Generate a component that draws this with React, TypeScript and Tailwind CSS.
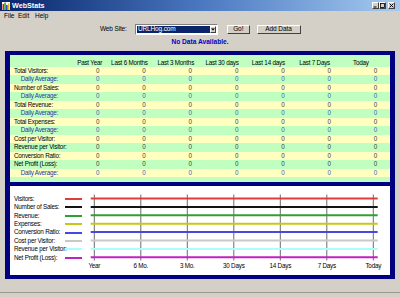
import React from "react";

const FONT = { fontFamily: '"Liberation Sans", Arial, sans-serif' };

const columns = ["Past Year", "Last 6 Months", "Last 3 Months", "Last 30 days", "Last 14 days", "Last 7 Days", "Today"];

const rows = [
    {name: "Total Visitors:", daily: false},
    {name: "Daily Average:", daily: true},
    {name: "Number of Sales:", daily: false},
    {name: "Daily Average:", daily: true},
    {name: "Total Revenue:", daily: false},
    {name: "Daily Average:", daily: true},
    {name: "Total Expenses:", daily: false},
    {name: "Daily Average:", daily: true},
    {name: "Cost per Visitor:", daily: false},
    {name: "Revenue per Visitor:", daily: false},
    {name: "Conversion Ratio:", daily: false},
    {name: "Net Profit (Loss):", daily: false},
    {name: "Daily Average:", daily: true},
];

const series = [
    {name: "Visitors:", color: "#e03c3c"},
    {name: "Number of Sales:", color: "#141414"},
    {name: "Revenue:", color: "#30a030"},
    {name: "Expenses:", color: "#c8c814"},
    {name: "Conversion Ratio:", color: "#4848e0"},
    {name: "Cost per Visitor:", color: "#c8c8c8"},
    {name: "Revenue per Visitor:", color: "#a8ffff"},
    {name: "Net Profit (Loss):", color: "#c020c0"},
];

const ticks = ["Year", "6 Mo.", "3 Mo.", "30 Days", "14 Days", "7 Days", "Today"];

const AppIcon = () => (
    <svg width="8" height="8" viewBox="0 0 8 8">
        <rect x="0" y="0" width="8" height="8" fill="#ffffff"/>
        <rect x="0.5" y="2" width="1.5" height="6" fill="#e02020"/>
        <rect x="2.3" y="0.5" width="1.5" height="7.5" fill="#20a020"/>
        <rect x="4.1" y="3" width="1.5" height="5" fill="#2030d0"/>
        <rect x="5.9" y="1.5" width="1.5" height="6.5" fill="#e0c000"/>
    </svg>
);

const CaptionButton: React.FC<{kind: "min" | "max" | "close"}> = ({kind}) => (
    <div className="w-[7px] h-[7px] bg-[#d4d0c8] border-t border-l border-white border-r border-b border-r-[#404040] border-b-[#404040] flex items-center justify-center">
        <svg width="5" height="5" viewBox="0 0 5 5">
            {kind === "min" && <rect x="0.5" y="3.5" width="3" height="1" fill="#000"/>}
            {kind === "max" && <rect x="0.5" y="0.5" width="4" height="4" fill="none" stroke="#000" strokeWidth="0.8"/>}
            {kind === "close" && <path d="M0.6 0.6 L4.4 4.4 M4.4 0.6 L0.6 4.4" stroke="#000" strokeWidth="0.9"/>}
        </svg>
    </div>
);

const WinButton: React.FC<{label: string; w: string}> = ({label, w}) => (
    <div
        className={`${w} h-[9.5px] bg-[#d4d0c8] border-t border-l border-white border-r border-b border-r-[#404040] border-b-[#404040] flex items-center justify-center text-[6.5px] tracking-[-0.1px] leading-none text-black`}>
        {label}
    </div>
);

const App: React.FC = () => {
    const gx = [8.3, 54.8, 101.3, 147.8, 194.3, 240.8, 287.3];

    return (
        <div className="w-[400px] h-[297px] bg-[#d4d0c8] overflow-hidden flex flex-col" style={FONT}>
            {/* title bar */}
            <div className="h-[11px] shrink-0 bg-linear-to-r from-[#0a246a] via-[#4a78c0] to-[#a6caf0] flex items-center pl-[2px] pr-[5px]">
                <AppIcon/>
                <span className="ml-[2px] text-[7.2px] font-bold text-white leading-none">WebStats</span>
                <div className="ml-auto flex items-center">
                    <CaptionButton kind="min"/>
                    <CaptionButton kind="max"/>
                    <div className="w-[2px]"/>
                    <CaptionButton kind="close"/>
                </div>
            </div>

            {/* menu */}
            <div className="h-[11px] shrink-0 flex items-center pl-[4px] text-[6.5px] leading-none text-black">
                <span className="w-[14px]">File</span>
                <span className="w-[17px]">Edit</span>
                <span>Help</span>
            </div>

            {/* site picker */}
            <div className="h-[15px] shrink-0 flex items-center text-[6.5px] tracking-[-0.15px] leading-none text-black">
                <span className="ml-[100px] w-[35px]">Web Site:</span>
                <div className="w-[83px] h-[11px] bg-white border-t border-l border-[#808080] border-r border-b border-r-white border-b-white flex items-center p-[1px]">
                    <div className="flex-1 h-full bg-[#0a246a] text-white flex items-center pl-[1px]">URLHog.com</div>
                    <div className="w-[6px] h-full bg-[#d4d0c8] border-t border-l border-white border-r border-b border-r-[#404040] border-b-[#404040] flex items-center justify-center">
                        <svg width="4" height="3" viewBox="0 0 4 3">
                            <path d="M0 0.5 L4 0.5 L2 2.5 Z" fill="#000"/>
                        </svg>
                    </div>
                </div>
                <div className="ml-[9px]"><WinButton label="Go!" w="w-[22.5px]"/></div>
                <div className="ml-[7px]"><WinButton label="Add Data" w="w-[44px]"/></div>
            </div>

            <div className="h-[10px] shrink-0 flex items-center justify-center text-[6.6px] font-bold text-[#0000c8] leading-none">
                No Data Available.
            </div>

            {/* frame */}
            <div className="mt-[4px] ml-[5px] w-[390px] bg-[#000080] pt-[4px] px-[5px] pb-[4px] flex flex-col gap-[4.8px]">
                <div className="h-[126.7px] bg-[#c0ffc0] flex flex-col text-[6.3px] tracking-[-0.22px] leading-[8px]">
                    <div className="h-[11.5px] shrink-0 grid grid-cols-[43px_repeat(7,46.3px)_1fr] items-end text-black">
                        <div/>
                        {columns.map((c, i) => (
                            <div key={c}
                                 className={`flex justify-center whitespace-nowrap ${i === 0 ? "pl-[27px]" : "pl-[14px]"}`}>
                                {c}
                            </div>
                        ))}
                    </div>
                    {rows.map((r, i) => (
                        <div key={i}
                             className={`h-[8.5px] shrink-0 grid grid-cols-[43px_repeat(7,46.3px)_1fr] items-center ${i % 2 === 0 ? "bg-[#ffffc0]" : "bg-[#c0ffc0]"}`}>
                            <div
                                className={`whitespace-nowrap ${r.daily ? "pl-[10.7px] text-[#2838a0]" : "pl-[4px] text-black"}`}>
                                {r.name}
                            </div>
                            {columns.map((c) => (
                                <div key={c} className={`text-right ${r.daily ? "text-[#4462b0]" : "text-[#404040]"}`}>0</div>
                            ))}
                        </div>
                    ))}
                </div>

                <div className="h-[88.5px] bg-white flex">
                    <div className="w-[76px] shrink-0 pt-[8.3px] flex flex-col text-[6.3px] tracking-[-0.22px] leading-none text-black">
                        {series.map((s) => (
                            <div key={s.name} className="h-[8.4px] flex items-center">
                                <span className="w-[55px] pl-[4px] whitespace-nowrap">{s.name}</span>
                                <span className="w-[17px] h-[2px]" style={{backgroundColor: s.color}}/>
                            </div>
                        ))}
                    </div>
                    <svg width="302" height="88.5" viewBox="0 0 302 88.5" className="shrink-0">
                        {gx.map((x) => (
                            <line key={x} x1={x} y1="8.5" x2={x} y2="74.5" stroke="#6c6c6c" strokeWidth="1"/>
                        ))}
                        {series.map((s, i) => (
                            <line key={s.name} x1="4.7" y1={12.5 + i * 8.4} x2="291.7" y2={12.5 + i * 8.4}
                                  stroke={s.color} strokeWidth="2"/>
                        ))}
                        {ticks.map((t, i) => (
                            <text key={t} x={gx[i]} y="82" textAnchor="middle" fontSize="6.3" letterSpacing="-0.22"
                                  fill="#000" fontFamily='"Liberation Sans", Arial, sans-serif'>{t}</text>
                        ))}
                    </svg>
                </div>
            </div>

            <div className="mt-auto h-[5px] border-t border-[#9a9890]"/>
        </div>
    );
};

export default App;
